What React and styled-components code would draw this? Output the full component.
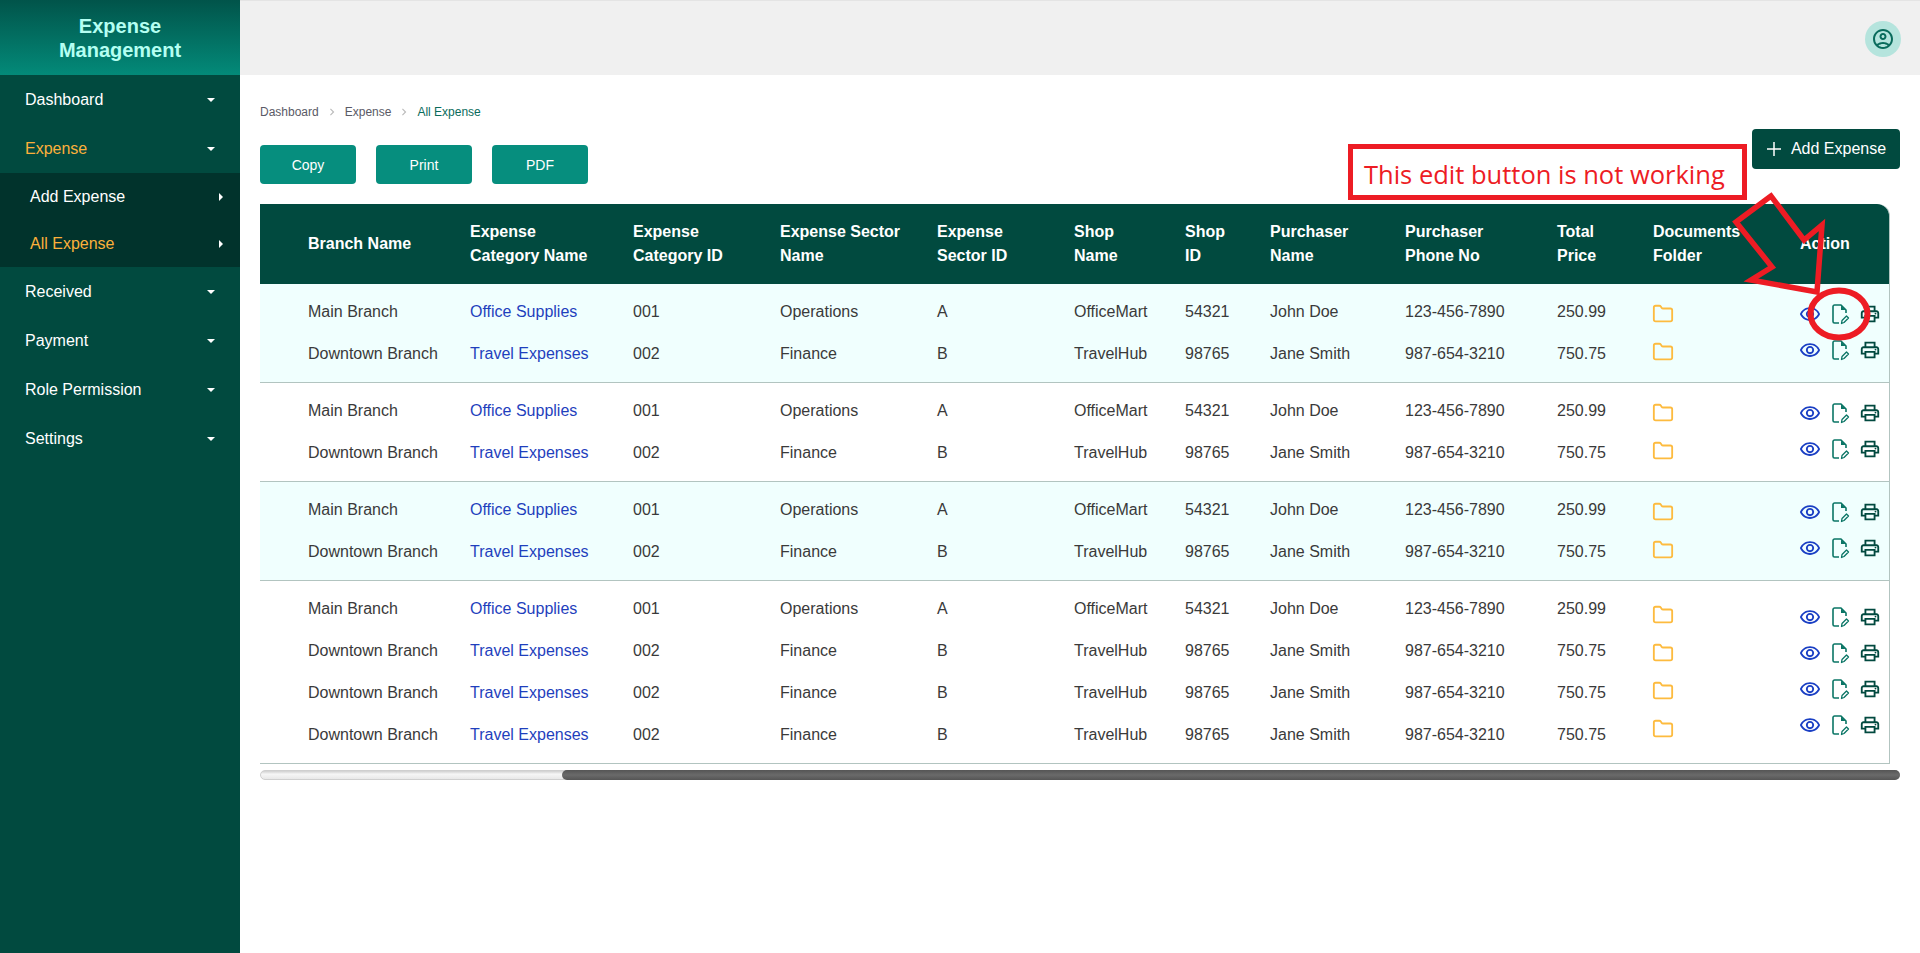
import React from 'react'
import styled, { createGlobalStyle } from 'styled-components'
import { Folder } from 'lucide-react'
import { MdOutlineRemoveRedEye, MdOutlinePrint, MdOutlineAccountCircle, MdKeyboardArrowRight } from 'react-icons/md'

const GlobalStyle = createGlobalStyle`
  html, body { margin: 0; padding: 0; height: 100%; }
  body { font-family: "Liberation Sans", Arial, sans-serif; background: #fff; overflow: hidden; }
  * { box-sizing: border-box; }
`

const Page = styled.div`
  position: relative;
  display: flex;
  height: 953px;
`

const Sidebar = styled.aside`
  width: 240px;
  flex-shrink: 0;
  background: #014a3f;
`

const Brand = styled.div`
  height: 75px;
  padding-top: 14px;
  background: linear-gradient(180deg, #01544a 0%, #038a79 100%);
  color: #b4fff2;
  font-size: 20px;
  font-weight: 700;
  line-height: 24px;
  text-align: center;
`

const Menu = styled.nav`
  display: flex;
  flex-direction: column;
`

const MenuItem = styled.div`
  display: flex;
  align-items: center;
  justify-content: space-between;
  height: 49px;
  padding: 0 25px;
  font-size: 16px;
  color: ${p => (p.$active ? '#fbb03b' : '#fff')};
`

const Caret = styled.span`
  width: 0;
  height: 0;
  border-left: 4px solid transparent;
  border-right: 4px solid transparent;
  border-top: 4px solid #fff;
`

const SubMenu = styled.div`
  background: #01332c;
`

const SubItem = styled.div`
  display: flex;
  align-items: center;
  justify-content: space-between;
  height: 47px;
  padding: 0 17px 0 30px;
  font-size: 16px;
  color: ${p => (p.$active ? '#fbb03b' : '#fff')};
`

const CaretRight = styled.span`
  width: 0;
  height: 0;
  border-top: 4px solid transparent;
  border-bottom: 4px solid transparent;
  border-left: 4px solid #fff;
`

const Main = styled.main`
  flex: 1;
  min-width: 0;
  display: flex;
  flex-direction: column;
`

const TopBar = styled.header`
  height: 75px;
  flex-shrink: 0;
  display: flex;
  align-items: center;
  justify-content: flex-end;
  padding: 1px 19px 0 0;
  background: #f0f0f0;
  border-top: 1px solid #e4e4e4;
`

const Avatar = styled.div`
  width: 36px;
  height: 36px;
  border-radius: 50%;
  display: flex;
  align-items: center;
  justify-content: center;
  background: #b5e4dd;
  color: #0a6b5c;
  font-size: 24px;
`

const Content = styled.div`
  padding: 29px 20px 0 20px;
`

const Crumbs = styled.div`
  display: flex;
  align-items: center;
  height: 16px;
  font-size: 12px;
`

const CrumbSep = styled.span`
  display: flex;
  margin: 0 6px;
  color: #bbb;
  font-size: 14px;
`

const Crumb = styled.span`
  color: ${p => (p.$current ? '#0a6b5c' : '#5a5a66')};
`

const Toolbar = styled.div`
  display: flex;
  align-items: flex-start;
  justify-content: space-between;
  height: 84px;
`

const Exports = styled.div`
  display: flex;
  gap: 20px;
  margin-top: 25px;
`

const ExportBtn = styled.button`
  width: 96px;
  height: 39px;
  border: 0;
  border-radius: 4px;
  background: #068e7e;
  color: #fff;
  font-family: inherit;
  font-size: 14px;
`

const AddBtn = styled.button`
  display: flex;
  align-items: center;
  justify-content: center;
  gap: 9px;
  width: 148px;
  height: 40px;
  margin-top: 9px;
  border: 0;
  border-radius: 4px;
  background: #014a3f;
  color: #fff;
  font-family: inherit;
  font-size: 16px;
`

const Plus = styled.svg`
  width: 16px;
  height: 16px;
`

const TableWrap = styled.div`
  width: 1630px;
  border-right: 1px solid #b2c4c0;
  border-top-right-radius: 12px;
`

const Table = styled.table`
  width: 100%;
  table-layout: fixed;
  border-collapse: separate;
  border-spacing: 0;
`

const Th = styled.th`
  height: 80px;
  padding: 0 0 0 ${p => p.$pad || 0}px;
  background: #014a3f;
  color: #fff;
  font-size: 16px;
  font-weight: 700;
  line-height: 24px;
  text-align: left;
  &:last-child { border-top-right-radius: 12px; }
`

const Td = styled.td`
  padding: 7px 0 7px ${p => p.$pad || 0}px;
  vertical-align: middle;
  background: ${p => (p.$odd ? '#f0fffe' : '#fff')};
  border-bottom: 1px solid #b2c4c0;
`

const Line = styled.div`
  height: 42px;
  line-height: 42px;
  font-size: 16px;
  white-space: nowrap;
  color: ${p => (p.$link ? '#1f3fbd' : '#3a3a3a')};
`

const FolderLine = styled.div`
  height: 38px;
  display: flex;
  align-items: center;
  margin-left: -1px;
  color: #fdbb3f;
`

const ActionLine = styled.div`
  height: 36px;
  display: flex;
  align-items: center;
  gap: 8px;
  margin-left: -1px;
  padding-bottom: 2px;
`

const IconBox = styled.span`
  display: flex;
  width: 22px;
  justify-content: center;
  color: ${p => p.$color};
  font-size: 22px;
`

const Scrollbar = styled.div`
  display: flex;
  width: 1640px;
  height: 10px;
  margin-top: 6px;
  border-radius: 5px;
  background: linear-gradient(180deg, #d0d0d0 0%, #f6f6f6 40%, #e8e8e8 100%);
  border: 1px solid #cfcfcf;
`

const Thumb = styled.div`
  margin-left: auto;
  height: 10px;
  margin-top: -1px;
  margin-right: -1px;
  border-radius: 5px;
  background: linear-gradient(180deg, #555 0%, #6a6a6a 50%, #555 100%);
`

// the red markup someone drew over the screenshot
const NoteBox = styled.div`
  position: absolute;
  left: 1348px;
  top: 144px;
  width: 399px;
  height: 56px;
  display: flex;
  align-items: center;
  padding: 3px 0 0 11px;
  border: 5px solid #ed1c24;
  background: #fff;
  color: #ed1c24;
  font-family: "Open Sans", sans-serif;
  font-size: 25.500px;
`

const Markup = styled.svg`
  position: absolute;
  left: 0;
  top: 0;
  width: 1920px;
  height: 953px;
  pointer-events: none;
`

const columns = [
  ['Branch Name', 210, 48],
  ['Expense<br>Category Name', 163],
  ['Expense<br>Category ID', 147],
  ['Expense Sector<br>Name', 157],
  ['Expense<br>Sector ID', 137],
  ['Shop<br>Name', 111],
  ['Shop<br>ID', 85],
  ['Purchaser<br>Name', 135],
  ['Purchaser<br>Phone No', 152],
  ['Total<br>Price', 96],
  ['Documents<br>Folder', 147],
  ['Action', 0],
]

const main = ['Main Branch', 'Office Supplies', '001', 'Operations', 'A', 'OfficeMart', '54321', 'John Doe', '123-456-7890', '250.99']
const down = ['Downtown Branch', 'Travel Expenses', '002', 'Finance', 'B', 'TravelHub', '98765', 'Jane Smith', '987-654-3210', '750.75']

const groups = [
  [main, down],
  [main, down],
  [main, down],
  [main, down, down, down],
]

const PageEditIcon = () => (
  <svg width="22" height="22" viewBox="0 0 22 22" fill="none">
    <path d="M10 20H5.500C4.700 20 4 19.300 4 18.500V3.500C4 2.700 4.700 2 5.500 2H12L17 7V10" stroke="#0a7565" strokeWidth="1.600" strokeLinejoin="round" />
    <path d="M12 2.500L16.500 7H12Z" fill="#0a7565" />
    <path d="M12.500 20.500L13 17.500L17.500 13L19.500 15L15 19.500Z" stroke="#0a7565" strokeWidth="1.300" strokeLinejoin="round" />
  </svg>
)

const HeaderLabel = ({ text }) => {
  const parts = text.split('<br>')
  return parts.map((p, i) => <div key={i}>{p}</div>)
}

export default function App() {
  return (
    <>
      <GlobalStyle />
      <Page>
        <Sidebar>
          <Brand>Expense<br />Management</Brand>
          <Menu>
            <MenuItem>Dashboard<Caret /></MenuItem>
            <MenuItem $active>Expense<Caret /></MenuItem>
            <SubMenu>
              <SubItem>Add Expense<CaretRight /></SubItem>
              <SubItem $active>All Expense<CaretRight /></SubItem>
            </SubMenu>
            <MenuItem>Received<Caret /></MenuItem>
            <MenuItem>Payment<Caret /></MenuItem>
            <MenuItem>Role Permission<Caret /></MenuItem>
            <MenuItem>Settings<Caret /></MenuItem>
          </Menu>
        </Sidebar>
        <Main>
          <TopBar>
            <Avatar><MdOutlineAccountCircle /></Avatar>
          </TopBar>
          <Content>
            <Crumbs>
              <Crumb>Dashboard</Crumb>
              <CrumbSep><MdKeyboardArrowRight /></CrumbSep>
              <Crumb>Expense</Crumb>
              <CrumbSep><MdKeyboardArrowRight /></CrumbSep>
              <Crumb $current>All Expense</Crumb>
            </Crumbs>
            <Toolbar>
              <Exports>
                <ExportBtn>Copy</ExportBtn>
                <ExportBtn>Print</ExportBtn>
                <ExportBtn>PDF</ExportBtn>
              </Exports>
              <AddBtn>
                <Plus viewBox="0 0 16 16"><path d="M8 1V15M1 8H15" stroke="#fff" strokeWidth="1.500" /></Plus>
                Add Expense
              </AddBtn>
            </Toolbar>
            <TableWrap>
              <Table>
                <colgroup>
                  {columns.map((c, i) => <col key={i} style={c[1] ? { width: c[1] } : undefined} />)}
                </colgroup>
                <thead>
                  <tr>
                    {columns.map((c, i) => (
                      <Th key={i} $pad={c[2]}><HeaderLabel text={c[0]} /></Th>
                    ))}
                  </tr>
                </thead>
                <tbody>
                  {groups.map((rows, g) => (
                    <tr key={g}>
                      {main.map((_, col) => (
                        <Td key={col} $odd={g % 2 === 0} $pad={col === 0 ? 48 : 0}>
                          {rows.map((r, i) => <Line key={i} $link={col === 1}>{r[col]}</Line>)}
                        </Td>
                      ))}
                      <Td $odd={g % 2 === 0}>
                        {rows.map((_, i) => <FolderLine key={i}><Folder size={22} strokeWidth={2} /></FolderLine>)}
                      </Td>
                      <Td $odd={g % 2 === 0}>
                        {rows.map((_, i) => (
                          <ActionLine key={i}>
                            <IconBox $color="#1a3fc4"><MdOutlineRemoveRedEye /></IconBox>
                            <IconBox><PageEditIcon /></IconBox>
                            <IconBox $color="#01493f"><MdOutlinePrint /></IconBox>
                          </ActionLine>
                        ))}
                      </Td>
                    </tr>
                  ))}
                </tbody>
              </Table>
            </TableWrap>
            <Scrollbar>
              <Thumb style={{ width: `${(1338 / 1638) * 100}%` }} />
            </Scrollbar>
          </Content>
        </Main>
        <NoteBox>This edit button is not working</NoteBox>
        <Markup viewBox="0 0 1920 953" fill="none">
          <path d="M1771 196L1736 222L1772 267L1751 280L1817 292L1822 225L1804 240Z" stroke="#ed1c24" strokeWidth="5.500" />
          <ellipse cx="1839" cy="314" rx="28.500" ry="23.500" stroke="#ed1c24" strokeWidth="6" />
        </Markup>
      </Page>
    </>
  )
}
